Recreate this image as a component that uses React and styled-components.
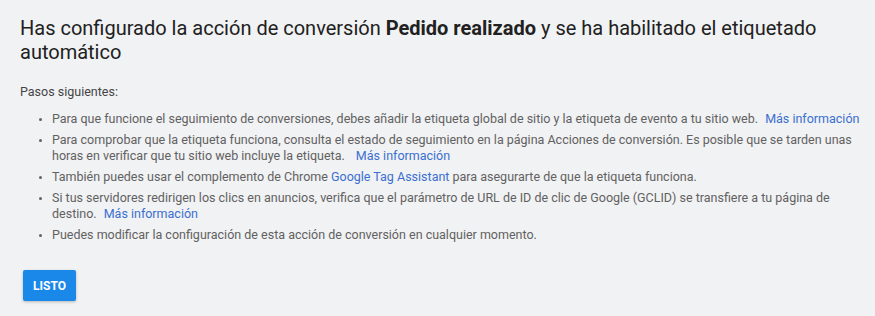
import React from 'react';
import styled, { createGlobalStyle } from 'styled-components';

const GlobalStyle = createGlobalStyle`
html, body {
    margin: 0;
    padding: 0;
    background: #f1f2f4;
}
body {
    font-family: Roboto, "Liberation Sans", Arial, sans-serif;
}
`;

const Page = styled.div`
width: 875px;
height: 316px;
box-sizing: border-box;
padding: 16px 10px 0 20px;
background: #f1f2f4;
`;

const Title = styled.h1`
margin: 0;
font-size: 20px;
line-height: 24px;
font-weight: 400;
color: #212121;
& b {
    font-weight: 700;
}
`;

const StepsLabel = styled.div`
margin-top: 20px;
font-size: 12.5px;
line-height: 16px;
color: #444;
`;

const StepList = styled.ul`
margin: 11px 0 0 0;
padding: 0 0 0 32px;
list-style: disc;
`;

const Step = styled.li`
font-size: 12.5px;
line-height: 16px;
color: #616161;
margin-bottom: 5px;
&::marker {
    font-size: 10px;
}
`;

const Link = styled.a`
color: #3a6fd0;
text-decoration: none;
white-space: nowrap;
margin-left: ${(p) => p.$gap || 0}px;
cursor: pointer;
`;

const PrimaryButton = styled.button`
display: block;
margin: 27px 0 0 3px;
height: 31px;
padding: 0 10px;
border: none;
border-radius: 2px;
background: #1a88e8;
color: #fff;
font-family: Roboto, "Liberation Sans", Arial, sans-serif;
font-size: 12px;
font-weight: 700;
box-shadow: 0 1px 3px rgba(0, 0, 0, 0.25);
cursor: pointer;
`;

const App = () => {
    return (
        <>
            <GlobalStyle />
            <Page>
                <Title>
                    Has configurado la acción de conversión <b>Pedido realizado</b> y se ha habilitado el etiquetado automático
                </Title>
                <StepsLabel>Pasos siguientes:</StepsLabel>
                <StepList>
                    <Step>
                        Para que funcione el seguimiento de conversiones, debes añadir la etiqueta global de sitio y la etiqueta de evento a tu sitio web. <Link $gap={4}>Más información</Link>
                    </Step>
                    <Step>
                        Para comprobar que la etiqueta funciona, consulta el estado de seguimiento en la página Acciones de conversión. Es posible que se tarden unas horas en verificar que tu sitio web incluye la etiqueta. <Link $gap={8}>Más información</Link>
                    </Step>
                    <Step>
                        También puedes usar el complemento de Chrome <Link>Google Tag Assistant</Link> para asegurarte de que la etiqueta funciona.
                    </Step>
                    <Step>
                        Si tus servidores redirigen los clics en anuncios, verifica que el parámetro de URL de ID de clic de Google (GCLID) se transfiere a tu página de destino. <Link $gap={4}>Más información</Link>
                    </Step>
                    <Step>Puedes modificar la configuración de esta acción de conversión en cualquier momento.</Step>
                </StepList>
                <PrimaryButton>LISTO</PrimaryButton>
            </Page>
        </>
    );
};

export default App;
